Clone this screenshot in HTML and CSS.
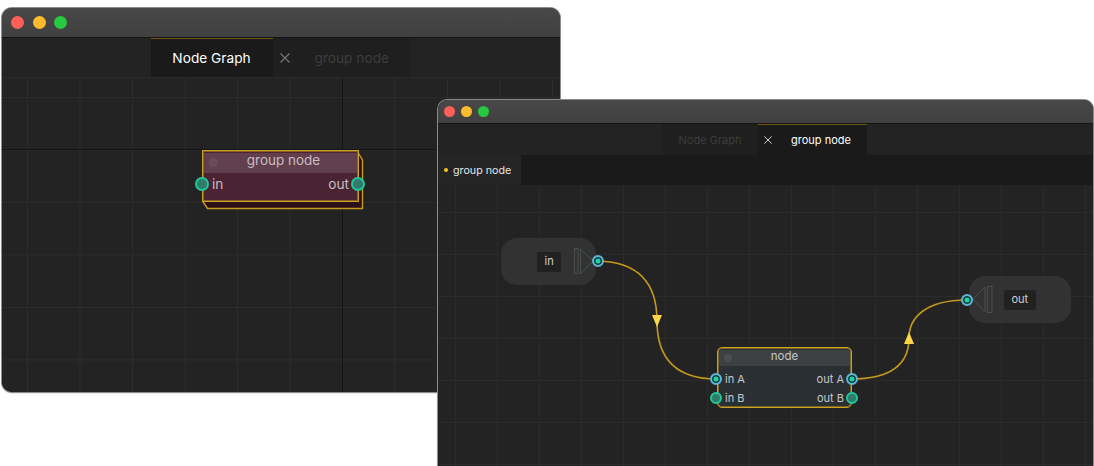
FILE: index.html
```html
<!DOCTYPE html>
<html lang="en">
<head>
<meta charset="utf-8">
<title>Node Graph</title>
<link rel="stylesheet" href="styles.css">
</head>
<body>
<section class="window window-back">
  <header class="titlebar">
    <span class="light red"></span><span class="light yellow"></span><span class="light green"></span>
  </header>
  <nav class="tabbar">
    <div class="tab tab-active"><span>Node Graph</span></div>
    <div class="tab tab-idle">
      <svg class="close" viewBox="0 0 10 10"><path d="M0.5 0.5L9.5 9.5M9.5 0.5L0.5 9.5"/></svg>
      <span>group node</span>
    </div>
  </nav>
  <main class="canvas">
    <i class="axis axis-v"></i><i class="axis axis-h"></i>
    <div class="group-node">
      <svg class="group-depth" viewBox="0 0 164 60">
        <path class="depth-fill" d="M155 1L160.5 10V58.5H5.500L0.5 51H155Z"/>
        <path class="depth-line" d="M155 1L160.5 10V58.5H5.5L0.5 51"/>
      </svg>
      <div class="group-face">
        <div class="group-head"><i class="dot"></i>group node</div>
        <div class="group-row"><span>in</span><span>out</span></div>
      </div>
      <i class="port big port-left"></i><i class="port big port-right"></i>
    </div>
  </main>
</section>

<section class="window window-front">
  <header class="titlebar">
    <span class="light red"></span><span class="light yellow"></span><span class="light green"></span>
  </header>
  <nav class="tabbar">
    <div class="tab tab-idle"><span>Node Graph</span></div>
    <div class="tab tab-active">
      <svg class="close" viewBox="0 0 10 10"><path d="M0.5 0.5L9.5 9.5M9.5 0.5L0.5 9.5"/></svg>
      <span>group node</span>
    </div>
  </nav>
  <div class="crumbs"><div class="crumb"><i class="crumb-dot"></i>group node</div></div>
  <main class="canvas">
    <div class="tunnel tunnel-in"><span class="tunnel-label">in</span></div>
    <div class="tunnel tunnel-out"><span class="tunnel-label">out</span></div>

    <svg class="wires" viewBox="0 0 655 281">
      <path class="wire" d="M160 76C202 77 219 100 219 136C219 172 237 194 279 194"/>
      <path class="wire" d="M413 194C452 194 471 180 471 153C471 133 487 115 529 115"/>
      <path class="arrow" d="M214 130H224L219 142Z"/>
      <path class="arrow" d="M466 159H476L471 147Z"/>
      <rect class="glyph" x="136.5" y="63.5" width="3.5" height="25"/>
      <path class="glyph" d="M142.5 64L155 76L142.5 89Z"/>
      <rect class="glyph" x="549.5" y="101.5" width="4.5" height="26"/>
      <path class="glyph" d="M547 102L535 114L547 127Z"/>
    </svg>

    <div class="node">
      <div class="node-head"><i class="dot"></i>node</div>
      <div class="node-row"><span>in A</span><span>out A</span></div>
      <div class="node-row"><span>in B</span><span>out B</span></div>
      <i class="port linked node-a-left"></i><i class="port linked node-a-right"></i>
      <i class="port node-b-left"></i><i class="port node-b-right"></i>
    </div>
    <i class="port linked tunnel-port-in"></i>
    <i class="port linked tunnel-port-out"></i>
  </main>
</section>
</body>
</html>
```
FILE: styles.css
```css
* { box-sizing: border-box; }

html, body {
  margin: 0;
  height: 466px;
  overflow: hidden;
  background: #ffffff;
  font-family: Inter, "Liberation Sans", sans-serif;
}

.window {
  position: absolute;
  display: flex;
  flex-direction: column;
  overflow: hidden;
  background: #232323;
  box-shadow: 0 0 0 1px #8c8c8c, 0 1px 2px rgba(0, 0, 0, 0.3);
}

.window-back {
  left: 2px;
  top: 8px;
  width: 558px;
  height: 384px;
  border-radius: 10px;
}

.window-front {
  left: 438px;
  top: 100px;
  width: 655px;
  height: 380px;
  border-radius: 9px 9px 0 0;
}

.titlebar {
  flex: none;
  display: flex;
  align-items: center;
  background: linear-gradient(#484848, #404040);
  border-bottom: 1px solid #141414;
}

.window-back .titlebar { height: 30px; gap: 8.5px; padding: 0 0 1px 9px; }
.window-front .titlebar { height: 24px; gap: 5px; padding: 0 0 1px 6px; }

.light { display: block; border-radius: 50%; }
.window-back .light { width: 13px; height: 13px; }
.window-front .light { width: 11px; height: 11px; margin-right: 1px; }
.red { background: #fe5f57; }
.yellow { background: #febb2e; }
.green { background: #28c840; }

.tabbar {
  flex: none;
  display: flex;
  justify-content: center;
  padding-right: 2px;
  background: #232323;
}

.window-back .tabbar { height: 40px; border-bottom: 1px solid #2b2b2b; }
.window-front .tabbar { height: 31px; }

.tab {
  display: flex;
  align-items: center;
  white-space: nowrap;
}

.tab-active {
  background: #1a1a1a;
  color: #ffffff;
  border-top: 1px solid #6f5710;
}

.tab-idle {
  background: #1f1f1f;
  color: #3d3d3d;
  border-top: 1px solid transparent;
}

.window-back .tab { font-size: 13.7px; }
.window-back .tab-active { width: 122px; justify-content: center; }
.window-back .tab-idle { width: 137px; padding-left: 7px; gap: 25px; }
.window-back .close { width: 10px; height: 10px; stroke: #777777; }

.window-front .tab { font-size: 11px; }
.window-front .tab-idle { width: 96px; justify-content: center; }
.window-front .tab-active { width: 109px; padding-left: 6px; gap: 19px; }
.window-front .close { width: 8px; height: 8px; stroke: #e8e8e8; }

.close { flex: none; fill: none; stroke-width: 1.1; }

.crumbs {
  flex: none;
  height: 30px;
  background: #1a1a1a;
}

.crumb {
  display: flex;
  align-items: center;
  width: 83px;
  height: 100%;
  padding-left: 6px;
  gap: 5px;
  background: #252525;
  border-radius: 0 2px 2px 0;
  color: #e6e6e6;
  font-size: 10.7px;
}

.crumb-dot {
  width: 4px;
  height: 4px;
  border-radius: 50%;
  background: #fcc419;
}

.canvas {
  position: relative;
  flex: 1;
  background-color: #232323;
  background-repeat: repeat;
}

.window-back .canvas {
  background-image:
    linear-gradient(#2c2c2c 1px, transparent 1px),
    linear-gradient(90deg, #2c2c2c 1px, transparent 1px);
  background-size: 52.5px 52.5px;
  background-position: 25px 19px;
}

.window-front .canvas {
  background-image:
    linear-gradient(#2b2b2b 1px, transparent 1px),
    linear-gradient(90deg, #2b2b2b 1px, transparent 1px);
  background-size: 42px 42px;
  background-position: 17px 27px;
}

.axis { position: absolute; background: #141414; }
.axis-v { left: 340px; top: 0; bottom: 0; width: 1px; }
.axis-h { left: 0; right: 0; top: 71px; height: 1px; }

.group-node {
  position: absolute;
  left: 200px;
  top: 72px;
  width: 164px;
  height: 60px;
  color: #c9bcc1;
}

.group-depth { position: absolute; inset: 0; width: 164px; height: 60px; }
.depth-fill { fill: #2b1019; }
.depth-line { fill: none; stroke: #c69b22; stroke-width: 1.4; }

.group-face {
  position: absolute;
  left: 0;
  top: 0;
  width: 157px;
  height: 52px;
  padding: 2px 1px 0;
  background: #4a2433;
  border: 1px solid #cfa322;
  box-shadow: inset 0 0 0 1px rgba(187, 146, 28, 0.55);
}

.group-head {
  position: relative;
  height: 20px;
  padding-left: 6px;
  background: #623f4c;
  text-align: center;
  font-size: 13.5px;
  line-height: 14px;
}

.group-row {
  display: flex;
  justify-content: space-between;
  padding: 1px 8px 0 8px;
  font-size: 13.7px;
  line-height: 21px;
}

.dot {
  position: absolute;
  left: 5px;
  top: 5px;
  width: 9px;
  height: 9px;
  border-radius: 50%;
  background: rgba(120, 120, 120, 0.25);
}

.port {
  position: absolute;
  width: 12px;
  height: 12px;
  border-radius: 50%;
  background: #2e7c69;
  border: 2px solid #1fc79b;
}

.port.big { width: 14px; height: 14px; top: 27px; }
.port-left { left: -7px; }
.port-right { left: 149px; }

.port.linked {
  background: #1ed4a4;
  border: 2px solid #5fb3d6;
  box-shadow: inset 0 0 0 1.5px #16333a;
}

.tunnel {
  position: absolute;
  display: flex;
  align-items: center;
  height: 47px;
  border-radius: 16px;
  background: #323232;
}

.tunnel-in { left: 63px; top: 53px; width: 95px; padding-left: 36px; }
.tunnel-out { left: 531px; top: 91px; width: 102px; padding-left: 35px; }

.tunnel-label {
  display: block;
  padding: 2px 7.5px 3px;
  border-radius: 2px;
  background: #212121;
  color: #d0d0d0;
  font-size: 11px;
  line-height: 15px;
}

.wires { position: absolute; left: 0; top: 0; width: 655px; height: 281px; }
.wire { fill: none; stroke: #c4981c; stroke-width: 1.6; }
.arrow { fill: #fdd44a; }
.glyph { fill: none; stroke: #49504f; stroke-width: 1; }

.node {
  position: absolute;
  left: 279px;
  top: 162px;
  width: 135px;
  height: 61px;
  padding: 2px 1px 0;
  border: 1px solid #cfa322;
  border-radius: 5px;
  background: #2a2f34;
  box-shadow: inset 0 0 0 1px rgba(187, 146, 28, 0.55);
  color: #c8c8c8;
  font-size: 11px;
}

.node-head {
  position: relative;
  height: 16px;
  border-radius: 2px;
  background: #3d4144;
  text-align: center;
  font-size: 11.5px;
  line-height: 13px;
}

.node-head .dot { top: 4px; left: 5px; width: 8px; height: 8px; }

.node-row {
  display: flex;
  justify-content: space-between;
  height: 19px;
  padding: 0 6px;
  line-height: 19px;
}

.node-row:nth-of-type(2) { margin-top: 4px; }

.node-a-left { left: -8px; top: 25px; }
.node-a-right { left: 128px; top: 25px; }
.node-b-left { left: -8px; top: 44px; }
.node-b-right { left: 128px; top: 44px; }

.tunnel-port-in { left: 154px; top: 70px; }
.tunnel-port-out { left: 523px; top: 109px; }
```
